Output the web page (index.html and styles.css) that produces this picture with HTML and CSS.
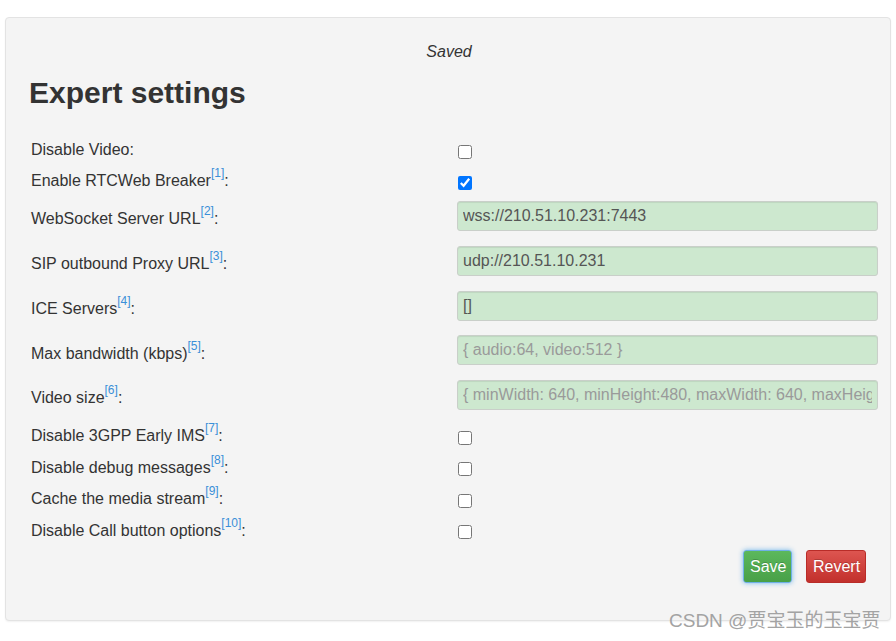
FILE: index.html
```html
<!DOCTYPE html>
<html>
<head>
<meta charset="utf-8">
<link rel="stylesheet" href="styles.css">
</head>
<body>
<div class="well">
  <div class="status">Saved</div>
  <h2 class="title">Expert settings</h2>
  <div class="form">
    <div class="row cb"><label>Disable Video:</label><input type="checkbox"></div>
    <div class="row cb"><label>Enable RTCWeb Breaker<sup><a>[1]</a></sup>:</label><input type="checkbox" checked></div>
    <div class="row tx"><label>WebSocket Server URL<sup><a>[2]</a></sup>:</label><input type="text" value="wss://210.51.10.231:7443"></div>
    <div class="row tx"><label>SIP outbound Proxy URL<sup><a>[3]</a></sup>:</label><input type="text" value="udp://210.51.10.231"></div>
    <div class="row tx"><label>ICE Servers<sup><a>[4]</a></sup>:</label><input type="text" value="[]"></div>
    <div class="row tx"><label>Max bandwidth (kbps)<sup><a>[5]</a></sup>:</label><input type="text" placeholder="{ audio:64, video:512 }"></div>
    <div class="row tx"><label>Video size<sup><a>[6]</a></sup>:</label><input type="text" placeholder="{ minWidth: 640, minHeight:480, maxWidth: 640, maxHeight:480 }"></div>
    <div class="row cb2"><label>Disable 3GPP Early IMS<sup><a>[7]</a></sup>:</label><input type="checkbox"></div>
    <div class="row cb2"><label>Disable debug messages<sup><a>[8]</a></sup>:</label><input type="checkbox"></div>
    <div class="row cb2"><label>Cache the media stream<sup><a>[9]</a></sup>:</label><input type="checkbox"></div>
    <div class="row cb2"><label>Disable Call button options<sup><a>[10]</a></sup>:</label><input type="checkbox"></div>
  </div>
  <div class="actions">
    <button class="btn btn-save">Save</button>
    <button class="btn btn-revert">Revert</button>
  </div>
</div>
<div class="watermark">CSDN @贾宝玉的玉宝贾</div>
</body>
</html>
```
FILE: styles.css
```css
html, body {
  margin: 0;
  padding: 0;
  background: #ffffff;
}
html {
  height: 100%;
}
body {
  position: relative;
  box-sizing: border-box;
  min-height: 641px;
  padding: 17px 5px 0;
  font-family: "Liberation Sans", Arial, sans-serif;
  font-size: 16px;
  color: #333333;
}
.well {
  background: #f4f4f4;
  border: 1px solid #e3e3e3;
  border-radius: 4px;
  box-shadow: 0 1px 2px rgba(0, 0, 0, 0.06);
  padding: 25px 12px 37px 25px;
}
.status {
  text-align: center;
  font-style: italic;
  line-height: 18px;
  padding-right: 11px;
}
.title {
  margin: 15px 0 0 -2px;
  font-size: 30px;
  line-height: 33px;
  font-weight: bold;
  color: #333333;
}
.form {
  margin-top: 27px;
  display: flex;
  flex-direction: column;
}
.row {
  display: flex;
  align-items: center;
}
.row label {
  width: 426px;
  flex: none;
  line-height: 18px;
  margin-bottom: 3px;
}
.row.cb { height: 31px; }
.row.cb2 { height: 31.5px; }
.row.tx {
  height: 44.75px;
}
.row.tx label {
  margin-bottom: 2px;
}
sup {
  font-size: 12px;
  line-height: 0;
  vertical-align: 9px;
}
sup a {
  color: #3a8fd8;
}
input[type="checkbox"] {
  margin: 0 0 0 1px;
  width: 14px;
  height: 14px;
}
input[type="text"] {
  align-self: flex-start;
  margin-top: 3px;
  box-sizing: border-box;
  width: 421px;
  height: 30px;
  padding: 0 5px;
  border: 1px solid #c9cfc9;
  border-radius: 3px;
  background: #cde8cf;
  box-shadow: inset 0 1px 1px rgba(0, 0, 0, 0.075);
  font-family: "Liberation Sans", Arial, sans-serif;
  font-size: 16px;
  color: #555555;
}
input[type="text"]::placeholder {
  color: #9a9a9a;
}
.actions {
  margin-top: 2px;
  display: flex;
  justify-content: flex-end;
  gap: 14px;
  padding-right: 12px;
}
.btn {
  box-sizing: border-box;
  height: 33px;
  padding: 2px 6px 0;
  font-family: "Liberation Sans", Arial, sans-serif;
  font-size: 16px;
  color: #ffffff;
  border-radius: 3px;
  text-shadow: 0 -1px 0 rgba(0, 0, 0, 0.2);
}
.btn-save {
  width: 49px;
  background: linear-gradient(to bottom, #5cb85c 0, #48a048 100%);
  border: 1px solid #6fb0e6;
  box-shadow: 0 0 5px rgba(102, 175, 233, 0.9);
}
.btn-revert {
  width: 60px;
  background: linear-gradient(to bottom, #dd5550 0, #c2302c 100%);
  border: 1px solid #b92c28;
}
.watermark {
  position: absolute;
  left: 669px;
  top: 610px;
  font-family: "Liberation Sans", "Noto Sans CJK SC", sans-serif;
  font-size: 19px;
  line-height: 21px;
  color: #a3a3a3;
  white-space: nowrap;
}
```
